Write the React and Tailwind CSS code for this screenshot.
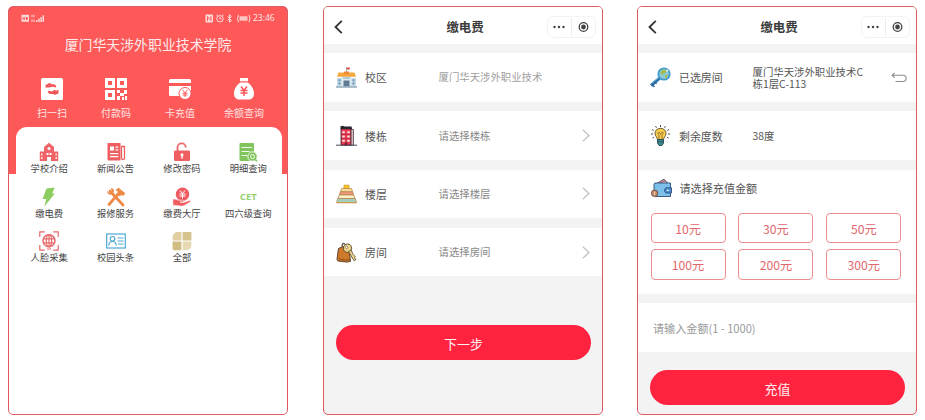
import React from "react";

/* ---------- icons of the home screen ---------- */

const ScanIcon = () => (
  <svg className="h-[22px] w-[22px]" viewBox="0 0 22 22">
    <rect width="22" height="22" rx="1.5" fill="#fff" />
    <path d="M4.500 9.500V7L9 4.800l1.200 1.400h3.300l2 2-1 1.400-3-.8L8 9.500Z" fill="#f4575a" />
    <path d="M17.500 11.500v4L13.500 17l-1.200-1H8.500l-2-2 1-1.200 3.500.8 2.500-1.800 2 .9Z" fill="#f4575a" />
  </svg>
);

const QrIcon = () => (
  <svg className="h-[22px] w-[22px]" viewBox="0 0 22 22">
    <g fill="#fff">
      <path fillRule="evenodd" d="M0 0h10v10H0ZM3 3v4h4V3ZM12 0h10v10H12ZM15 3v4h4V3ZM0 12h10v10H0ZM3 15v4h4v-4Z" />
      <path d="M12 12h3v3h-3ZM15 15h4v3h-4ZM19 12h3v4h-3ZM12 18h3v4h-3ZM17 19h2v3h-2ZM20 18h2v4h-2Z" />
    </g>
  </svg>
);

const CardIcon = () => (
  <svg className="h-[22px] w-[22px]" viewBox="0 0 22 22">
    <path d="M1.500 1h19A1.500 1.500 0 0 1 22 2.500V5H0V2.500A1.500 1.500 0 0 1 1.500 1ZM0 8h22v9H0Z" fill="#fff" />
    <path d="M0 16h13v2H1.500A1.500 1.500 0 0 1 0 16.500Z" fill="#fff" />
    <circle cx="16" cy="15.500" r="6" fill="#fff" stroke="#fc5858" strokeWidth="1" />
    <path d="m13.800 12.200 2.200 2.700 2.200-2.700M13.600 15.200h4.800M13.600 17h4.800M16 15v4" fill="none" stroke="#fc5858" strokeWidth="1" />
  </svg>
);

const MoneyBagIcon = () => (
  <svg className="h-[22px] w-[22px]" viewBox="0 0 22 22">
    <path d="M7 0h8v3.200H7ZM7.500 4.500h7C18 6.500 21 11 21 15.500c0 4-2.500 6-5.500 6h-9c-3 0-5.500-2-5.500-6C1 11 4 6.500 7.500 4.500Z" fill="#fff" />
    <path d="m8 8.500 3 3.700 3-3.700M7.500 12.500h7M7.500 15h7M11 12v6" fill="none" stroke="#f4575a" strokeWidth="1.500" />
  </svg>
);

const SchoolIcon = () => (
  <svg className="h-[20px] w-[20px]" viewBox="0 0 20 20">
    <path d="M10 .8 15 5v14H5V5Z" fill="#ef6467" />
    <path d="M.8 9.500H5V19H.8ZM15 9.500h4.200V19H15Z" fill="#ef6467" />
    <circle cx="10" cy="6.500" r="1.500" fill="#fff" />
    <path d="M7.500 11h2v2h-2ZM10.500 11h2v2h-2ZM8 15h4v4H8ZM2.200 11.500h1.200v2H2.200ZM2.200 15h1.200v2H2.200ZM16.600 11.500h1.200v2h-1.200ZM16.600 15h1.200v2h-1.200Z" fill="#fff" />
  </svg>
);

const NewsIcon = () => (
  <svg className="h-[20px] w-[20px]" viewBox="0 0 20 20">
    <path d="M1.500 1h13v17.500h-12a1 1 0 0 1-1-1Z" fill="#ef5f62" />
    <path d="M15.500 4.500h3v12.200a1.800 1.800 0 0 1-3 0Z" fill="none" stroke="#ef5f62" strokeWidth="1.300" />
    <path d="M4 4.500h4v4H4ZM9.500 4.500h2.800v1.200H9.500ZM9.500 7.300h2.800v1.200H9.500ZM4 11h8.300v1.300H4ZM4 14h8.300v1.300H4Z" fill="#fff" />
  </svg>
);

const LockIcon = () => (
  <svg className="h-[20px] w-[20px]" viewBox="0 0 20 20">
    <path d="M5.500 9V5.500A4 4 0 0 1 13.800 5.500" fill="none" stroke="#ee6b6e" strokeWidth="1.900" />
    <rect x="2" y="8.500" width="16" height="10.500" rx="1.300" fill="#ef5f62" />
    <path d="M9.300 13.500h1.500v3H9.300Z" fill="#fff" />
    <circle cx="10" cy="12.800" r="1.500" fill="#fff" />
  </svg>
);

const DetailIcon = () => (
  <svg className="h-[20px] w-[20px]" viewBox="0 0 20 20">
    <rect x="1.500" y="1" width="14.500" height="18" rx="1" fill="#80c45c" />
    <path d="M3.500 5.500h10.500M3.500 9.500h8M3.500 13.500h5.500" stroke="#fff" strokeWidth=".9" />
    <circle cx="14.500" cy="14.500" r="4.700" fill="#80c45c" stroke="#fff" strokeWidth=".9" />
    <circle cx="14.500" cy="14.500" r="2" fill="none" stroke="#fff" strokeWidth="1" />
    <path d="m17.200 17.500 1.800 1.800" stroke="#80c45c" strokeWidth="1.600" />
  </svg>
);

const BoltIcon = () => (
  <svg className="h-[20px] w-[20px]" viewBox="0 0 20 20">
    <path d="m7.500 1.500 8.200-1-2.500 6h2.500L5.300 19.800l2-7.800H3.500Z" fill="#8bce5f" />
  </svg>
);

const ToolsIcon = () => (
  <svg className="h-[20px] w-[20px]" viewBox="0 0 20 20">
    <path d="m4 4 13 14" stroke="#ee8a45" strokeWidth="2.800" strokeLinecap="round" />
    <path d="M1 3.800 3.500 6 6 3.800 4.500 1.200C7 .8 8.500 2.500 7.800 5L5 7.800C3 8 1 6.500 1 3.800Z" fill="#ee8a45" />
    <path d="M12 7 3 17.500" stroke="#ee8a45" strokeWidth="2.800" strokeLinecap="round" />
    <path d="m9.500 3 3-2.200 6.800 5.500-1.800 2.500-1.800-.6L13 9.300 10.800 7l1.400-2Z" fill="#ee8a45" />
  </svg>
);

const PayHallIcon = () => (
  <svg className="h-[20px] w-[20px]" viewBox="0 0 20 20">
    <circle cx="10.500" cy="7.200" r="6.700" fill="#ee5c60" />
    <path d="m8 3.500 2.500 3 2.500-3M7.500 7h6M7.500 9h6M10.500 6.500v5" fill="none" stroke="#fff" strokeWidth="1" />
    <path d="M.8 12.200c3-.8 4.200 1 7 1h3c1.500.4 1 1.800 0 1.800H8l3 .6 6.800-2.300c1.300 0 1.300 1 .5 1.600L12 18.700c-3 1.200-6-.5-11.200-.5Z" fill="#ee5c60" stroke="#fff" strokeWidth=".6" />
  </svg>
);

const FaceIcon = () => (
  <svg className="h-[20px] w-[20px]" viewBox="0 0 20 20" fill="none" stroke="#e8696b" strokeWidth="1.200">
    <path d="M.8 6V.8h5M14.200.8h5V6M19.200 14v5.200h-5M5.800 19.200h-5V14" />
    <circle cx="10" cy="9.800" r="6" strokeWidth="1.500" />
    <ellipse cx="10" cy="9.800" rx="2.700" ry="6" />
    <path d="M4.300 7.800h11.400M4.300 11.800h11.400M10 4v12M8 18h4" />
  </svg>
);

const IdCardIcon = () => (
  <svg className="h-[20px] w-[20px]" viewBox="0 0 20 20" fill="none" stroke="#4fa9d6" strokeWidth="1.200">
    <rect x=".7" y="3" width="18.600" height="14" />
    <circle cx="6.500" cy="7.800" r="2.300" />
    <path d="M2.700 14.500c.2-2.500 1.700-4 3.800-4s3.600 1.500 3.800 4M11.500 7h6M11.500 10h6M12 13h5.500" />
  </svg>
);

const AllIcon = () => (
  <svg className="h-[20px] w-[20px]" viewBox="0 0 20 20">
    <path d="M9.400 1v8.400H.6V6a5 5 0 0 1 5-5Z" fill="#dfcfa2" />
    <path d="M10.600 1h8.800v8.400h-8.800Z" fill="#d6c38d" />
    <path d="M.6 10.600h8.800v8.600H2a1.400 1.400 0 0 1-1.400-1.400Z" fill="#d1bd83" />
    <path d="M10.600 10.600h8.800v3.600a5 5 0 0 1-5 5h-3.800Z" fill="#e6d9b4" />
  </svg>
);

const CetMark = () => (
  <span className="font-['Noto_Sans',sans-serif] text-[9.5px] font-bold leading-5 text-[#96cf76]">CET</span>
);

/* ---------- icons of the form rows ---------- */

const CampusIcon = () => (
  <svg className="h-[21px] w-[21px]" viewBox="0 0 21 21">
    <path d="M10.500 0v6" stroke="#8aa0ad" strokeWidth=".8" />
    <path d="M10.800.4h3v2h-3Z" fill="#e0483e" />
    <path d="M1 11h19v8.500H1Z" fill="#c3dbe8" />
    <path d="M5.500 8h10v11.500h-10Z" fill="#dcebf2" />
    <path d="M2.500 5.500h16l1.500 4.200H1Z" fill="#f5a63c" />
    <path d="M8 4.500h5v3H8Z" fill="#f08b34" />
    <path d="M2.500 12.200h2v2h-2ZM2.500 15.500h2v2h-2ZM16.500 12.200h2v2h-2ZM16.500 15.500h2v2h-2Z" fill="#7194b0" />
    <path d="M7.500 13.500h6v6h-6Z" fill="#617b93" />
    <path d="M7 11h7" stroke="#8fa9b9" />
    <path d="M0 20h21" stroke="#91a8b8" strokeWidth="1.300" />
  </svg>
);

const BuildingIcon = () => (
  <svg className="h-[21px] w-[21px]" viewBox="0 0 21 21">
    <path d="M0 20.200h21" stroke="#343144" strokeWidth=".9" />
    <path d="M14.500 4.500h3V20h-3Z" fill="#d9b9bf" stroke="#3d3543" strokeWidth=".7" />
    <path d="M5 3.500h10V20H5Z" fill="#e8384e" stroke="#352a39" strokeWidth=".8" />
    <path d="M4.500 1.300 7 .7l1.500.8 7 .1.800 2.700H4.500Z" fill="#29242f" />
    <path d="M6.300 6.300h2.500v2H6.300ZM11.300 6.300h2.500v2h-2.500ZM6.300 10.500h2.500v2H6.300ZM11.300 10.500h2.500v2h-2.500ZM6.300 14.700h2.500v2H6.300ZM11.300 14.700h2.500v2h-2.500Z" fill="#f9e3e6" />
    <path d="M5 9.300h10M5 13.500h10M9 17.800h2V20H9Z" stroke="#8f2336" strokeWidth=".5" fill="#4b2534" />
  </svg>
);

const FloorIcon = () => (
  <svg className="h-[21px] w-[21px]" viewBox="0 0 21 21" stroke="#b98a52" strokeWidth=".8" strokeLinejoin="round">
    <path d="M8 2.200h5V6H8Z" fill="#f6c425" stroke="#d99b1d" />
    <path d="M5.500 5.500h10l1 3.300h-12Z" fill="#f8dc97" />
    <path d="m4.200 8.800h12.600l.8 3.200H3.400Z" fill="#ef967b" />
    <path d="M3.200 12h14.600l1 3.500H2.200Z" fill="#fbf1c9" />
    <path d="M1.700 15.500h17.600l1.200 4.200H.5Z" fill="#a4cdbd" />
    <path d="M.5 19.700h20" stroke="#d49a48" strokeWidth="1" />
  </svg>
);

const RoomIcon = () => (
  <svg className="h-[21px] w-[21px]" viewBox="0 0 21 21">
    <path d="M2.500 6.500 7 4.500l6 2.300 1.500 12.500-3.500.8L2 19l-1-1.700Z" fill="#cf7a2b" stroke="#51331e" strokeWidth=".9" />
    <path d="M2.800 16.500c4 1.800 7.500 1.800 11 1" fill="none" stroke="#8c4a1b" />
    <path d="M6 4.500C6 1 8 .5 9 2.500" fill="none" stroke="#3c342a" strokeWidth="1.100" />
    <circle cx="11.500" cy="6.200" r="4.200" fill="#ecd489" stroke="#4e402a" strokeWidth=".9" />
    <circle cx="10.500" cy="5.300" r="1.200" fill="#fff" stroke="#4e402a" strokeWidth=".5" />
    <path d="m12.500 9.500 5.500 9.200 1.800-1-1.200-2.200.8-1-1.200-1-1-1-1.200-2.500-1-2Z" fill="#ecd489" stroke="#4e402a" strokeWidth=".8" />
  </svg>
);

const KeyIcon = () => (
  <svg className="h-[21px] w-[21px]" viewBox="0 0 21 21">
    <path d="m11.500 9.500-10.500 9" stroke="#2d73a9" strokeWidth="3" />
    <path d="m1.500 16.500 3 3.500M4.500 14.500l2 2.300" stroke="#285f92" strokeWidth="1.300" />
    <path d="m11 8.500-9.500 8.200" stroke="#63b4de" strokeWidth="1" />
    <circle cx="14" cy="7" r="6.600" fill="#429acb" />
    <circle cx="14" cy="7" r="4.800" fill="#8bcbdc" />
    <path d="M11 3.500c2-1.500 4-1 5.500 0L16 6l-2.500.5-.5 2-2.500-1.700ZM15 8l3-.5-1 3-2 1.200Z" fill="#a1bd5a" />
    <circle cx="17.200" cy="3.700" r="1.100" fill="#f3efcf" />
  </svg>
);

const BulbIcon = () => (
  <svg className="h-[21px] w-[21px]" viewBox="0 0 21 21">
    <path d="M10.500 0v2M5.500 1l1 1.800M15.500 1l-1 1.800M2 4.500l1.700 1M19 4.500l-1.700 1M1 9h2M20 9h-2M2.500 13l1.500-.8M18.500 13l-1.500-.8" stroke="#514d45" strokeWidth="1" />
    <path d="M10.500 3.300c3.300 0 5.500 2.300 5.500 5.200 0 2.800-2.500 3.500-2.500 6.500h-6c0-3-2.500-3.700-2.500-6.500 0-2.900 2.200-5.200 5.500-5.200Z" fill="#f6d34e" stroke="#5e4a2b" strokeWidth=".9" />
    <path d="M9 15V9.500c-2-1-1.500-2.300-.3-2.300 1.300 0 1.800 2.300 1.800 2.300s.5-2.300 1.800-2.300c1.200 0 1.700 1.300-.3 2.300V15" fill="none" stroke="#9b642a" strokeWidth=".9" />
    <path d="M7.500 14.500h6V18l-1.500 2.500H9L7.500 18Z" fill="#3b8b8d" stroke="#274a50" strokeWidth=".9" />
    <path d="M7.500 16.700h6" stroke="#1f5058" strokeWidth=".8" />
  </svg>
);

const WalletIcon = () => (
  <svg className="h-[21px] w-[21px]" viewBox="0 0 21 21">
    <path d="m5 6 8-4.800L17 5.500Z" fill="#e98c98" stroke="#3e465e" strokeWidth=".9" />
    <path d="m8.500 5.500 5.500-2.500 2.500 2.800" fill="#f4d6c1" stroke="#74536a" strokeWidth=".7" />
    <path d="M4 5h15.500v13.500H4.800L3 16.500V6Z" fill="#7cc0ea" stroke="#304d75" strokeWidth=".9" />
    <path d="M15 9.800h5.500V15H15l-1.300-1.300v-2.600Z" fill="#4a8fcd" stroke="#294f80" strokeWidth=".9" />
    <path d="M15.800 12.400h2" stroke="#f4f0dd" strokeWidth="1.100" />
    <circle cx="3.600" cy="15.300" r="3.200" fill="#c38b67" stroke="#674b40" strokeWidth=".9" />
    <path d="M3.600 13.500v3.600" stroke="#f8dfb2" strokeWidth=".9" />
  </svg>
);

/* ---------- small controls ---------- */

const ArrowRight = () => (
  <svg className="h-[13px] w-2" viewBox="0 0 8 13" fill="none" stroke="#c4c4c4" strokeWidth="1.400">
    <path d="m.8.800 6.200 5.700-6.200 5.700" />
  </svg>
);

const ReturnIcon = () => (
  <svg className="-mr-[3px] h-[11px] w-4" viewBox="0 0 16 11" fill="none" stroke="#8c8c8c" strokeWidth="1.100">
    <path d="M3.800.800 1 3.200l2.800 2.500M1 3.200h11a3.100 3.100 0 0 1 0 6.300H4.500" />
  </svg>
);

const StatusBar = () => (
  <div className="flex h-3 items-center justify-between pl-3 pr-[12px] text-[#ffe3e3]">
    <svg className="h-[9px] w-6" viewBox="0 0 24 9" fill="#ffd9d9">
      <path fillRule="evenodd" d="M.5.800h7.500v7H.5ZM1.700 3v3h.8V4.800h.8V6h.8V3h-.8v1H2.500V3ZM5 3v3h1.700V3Z" />
      <path d="M10.500.800h1v2.500h-1ZM12.500.800h1v2.500h-1ZM10.500 5.500h1V8h-1ZM12.500 5.500h1V8h-1ZM15 6h1.500v2H15ZM17.200 4.500h1.500V8h-1.500ZM19.400 3h1.500v5h-1.500ZM21.600 1.200H23V8h-1.400Z" />
    </svg>
    <div className="flex items-center">
      <svg className="h-[9px] w-12" viewBox="0 0 48 9" fill="none" stroke="#ffdcdc" strokeWidth="1">
        <rect x=".5" y=".5" width="7.500" height="8" rx="1" fill="#ffdcdc" stroke="none" />
        <path d="M2.500 7V2.500L6 6.500V2" stroke="#fc5858" />
        <circle cx="15" cy="4.800" r="3.200" />
        <path d="M15 3v2h1.500M11.500 1.800 13 .7M18.500 1.800 17 .7M22.500 2.500l4 4-2 1.700V.8l2 1.700-4 4" />
        <path d="M33.500.8q-2 3.700 0 7.400M44 .8q2 3.700 0 7.400" />
        <path d="M34.500 2.200h8v4.600h-8Z" fill="#ffc5c5" stroke="none" />
      </svg>
      <span className="w-[22px] whitespace-nowrap font-['Noto_Sans',sans-serif] text-[8.5px] leading-3">23:46</span>
    </div>
  </div>
);

const PHONE = "h-[409px] w-[280px] shrink-0 overflow-hidden rounded-[5px] border border-[#dd5b61]";

const quickActions = [
  { label: "扫一扫", Icon: ScanIcon },
  { label: "付款码", Icon: QrIcon },
  { label: "卡充值", Icon: CardIcon },
  { label: "余额查询", Icon: MoneyBagIcon },
];

const services = [
  { label: "学校介绍", Icon: SchoolIcon },
  { label: "新闻公告", Icon: NewsIcon },
  { label: "修改密码", Icon: LockIcon },
  { label: "明细查询", Icon: DetailIcon },
  { label: "缴电费", Icon: BoltIcon },
  { label: "报修服务", Icon: ToolsIcon },
  { label: "缴费大厅", Icon: PayHallIcon },
  { label: "四六级查询", Icon: CetMark },
  { label: "人脸采集", Icon: FaceIcon },
  { label: "校园头条", Icon: IdCardIcon },
  { label: "全部", Icon: AllIcon },
];

function HomeScreen() {
  return (
    <section className={`${PHONE} bg-[linear-gradient(#fd5959_167px,#fff_167px)] pt-[5px]`}>
      <StatusBar />
      <h1 className="mt-[10px] text-center text-[13.9px] leading-5 text-[#ffeaea]">厦门华天涉外职业技术学院</h1>
      <div className="mt-[24px] flex pl-[11px] pr-[11px]">
        {quickActions.map(({ label, Icon }) => (
          <div key={label} className="flex flex-1 flex-col items-center">
            <Icon />
            <span className="mt-[7px] text-[10px] leading-3 text-[#ffe3e3]">{label}</span>
          </div>
        ))}
      </div>
      <div className="ml-[7px] mr-[5.5px] mt-2 h-[290px] rounded-t-[11px] bg-white pt-[15px]">
        <div className="grid grid-cols-4 gap-y-[12.7px]">
          {services.map(({ label, Icon }) => (
            <div key={label} className="flex h-8 flex-col items-center">
              <Icon />
              <span className="whitespace-nowrap text-[9.3px] leading-3 text-[#444]">{label}</span>
            </div>
          ))}
        </div>
      </div>
    </section>
  );
}

function NavBar() {
  return (
    <header className="grid h-[36.5px] shrink-0 grid-cols-[1fr_auto_1fr] items-center bg-white pl-2.5 pr-1.5 pt-[3px]">
      <svg className="h-[14px] w-[9px]" viewBox="0 0 9 14" fill="none" stroke="#333" strokeWidth="1.800">
        <path d="M7.800.8 1.500 7l6.300 6.200" />
      </svg>
      <h2 className="text-[12.4px] font-bold leading-5 text-[#3a3a3a]">缴电费</h2>
      <div className="flex h-[22px] w-[49px] items-center justify-self-end rounded-[6px] border border-[#f3f3f3]">
        <svg className="h-full w-full" viewBox="0 0 47 20">
          <path d="M23.500 1v18" stroke="#eee" />
          <g fill="#444">
            <circle cx="6.500" cy="10" r="1.200" />
            <circle cx="11" cy="10" r="1.200" />
            <circle cx="15.500" cy="10" r="1.200" />
            <circle cx="35.500" cy="10" r="2.400" />
          </g>
          <circle cx="35.500" cy="10" r="4.300" fill="none" stroke="#444" strokeWidth="1.300" />
        </svg>
      </div>
    </header>
  );
}

function Row({ Icon, label, children, end }) {
  return (
    <div className="flex h-[48.5px] shrink-0 items-center bg-white pl-3 pr-3">
      <Icon />
      <span className="ml-2 w-[73.500px] text-[10.9px] leading-4 text-[#555]">{label}</span>
      {children}
      {end && <span className="ml-auto">{end}</span>}
    </div>
  );
}

function PrimaryButton({ children }) {
  return (
    <button className="ml-3 mr-[11px] block h-[35.500px] shrink-0 rounded-full bg-[#ff2340] pt-[2px] text-[13px] leading-5 text-[#fff0f0]">
      {children}
    </button>
  );
}

const roomFields = [
  { label: "校区", Icon: CampusIcon, value: "厦门华天涉外职业技术", fixed: true },
  { label: "楼栋", Icon: BuildingIcon, value: "请选择楼栋" },
  { label: "楼层", Icon: FloorIcon, value: "请选择楼层" },
  { label: "房间", Icon: RoomIcon, value: "请选择房间" },
];

function RoomScreen() {
  return (
    <section className={`${PHONE} flex flex-col bg-[#f3f3f3]`}>
      <NavBar />
      <div className="mt-[9.7px] flex flex-col gap-[9.7px]">
        {roomFields.map(({ label, Icon, value, fixed }) => (
          <Row key={label} Icon={Icon} label={label} end={fixed ? null : <ArrowRight />}>
            <span className={`text-[10.4px] leading-4 ${fixed ? "text-[#a0a0a0]" : "text-[#888]"}`}>{value}</span>
          </Row>
        ))}
      </div>
      <div className="mt-[48.5px] flex flex-col">
        <PrimaryButton>下一步</PrimaryButton>
      </div>
    </section>
  );
}

const amounts = ["10元", "30元", "50元", "100元", "200元", "300元"];

function PayScreen() {
  return (
    <section className={`${PHONE} flex flex-col bg-[#f3f3f3]`}>
      <NavBar />
      <div className="mt-[9.7px] flex flex-col gap-[9.7px]">
        <Row
          Icon={KeyIcon}
          label="已选房间"
          end={<ReturnIcon />}
        >
          <p className="w-[116px] pt-px text-[10.4px] leading-3 text-[#555]">
            厦门华天涉外职业技术C
            <br />
            栋1层C-113
          </p>
        </Row>
        <Row Icon={BulbIcon} label="剩余度数">
          <span className="text-[10.4px] leading-4 text-[#555]">38度</span>
        </Row>
        <div className="h-[124px] bg-white pl-[12.5px] pr-3 pt-2">
          <div className="flex items-center gap-2">
            <WalletIcon />
            <span className="text-[11.1px] leading-4 text-[#555]">请选择充值金额</span>
          </div>
          <div className="mt-[14px] grid grid-cols-[repeat(3,75px)] gap-x-[12.9px] gap-y-1.5">
            {amounts.map((amount) => (
              <button key={amount} className="h-[30.5px] rounded-[4px] border border-[#ea8d91] pt-[2px] text-[12.2px] leading-4 text-[#e2666c]">
                {amount}
              </button>
            ))}
          </div>
        </div>
        <div className="flex h-[48.5px] items-center bg-white pl-[15px]">
          <span className="text-[11.1px] leading-4 text-[#9a9a9a]">请输入金额(1 - 1000)</span>
        </div>
      </div>
      <div className="mt-[18px] flex flex-col">
        <PrimaryButton>充值</PrimaryButton>
      </div>
    </section>
  );
}

export default function App() {
  return (
    <main className="flex h-[420px] w-[925px] overflow-hidden bg-white pl-2 pt-1.5 font-['Noto_Sans_CJK_SC',sans-serif]">
      <HomeScreen />
      <div className="ml-[35px]">
        <RoomScreen />
      </div>
      <div className="ml-[34px]">
        <PayScreen />
      </div>
    </main>
  );
}
